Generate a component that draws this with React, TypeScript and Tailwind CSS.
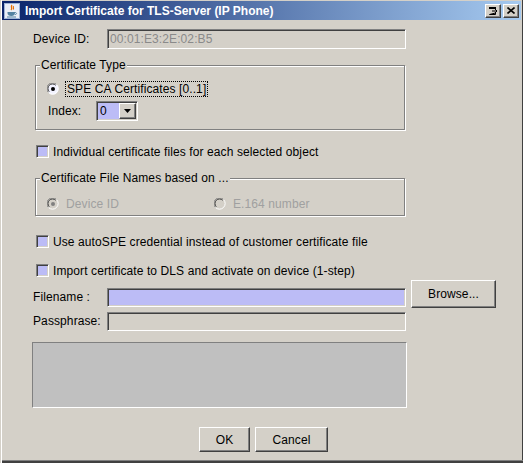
import React from "react";

const sunken =
  "border border-t-[#808080] border-l-[#808080] border-b-white border-r-white shadow-[inset_1px_1px_0_#404040,inset_-1px_-1px_0_#D4D0C8]";
const raised =
  "border border-t-white border-l-white border-b-[#404040] border-r-[#404040] shadow-[inset_-1px_-1px_0_#808080]";

function JavaIcon() {
  return (
    <svg width="16" height="16" viewBox="0 0 16 16">
      <rect x="0.5" y="0.5" width="15" height="15" fill="#E9EEF7" stroke="#9DB3D6" />
      <path d="M8 2 C6 4 9 5 7 7 M9.5 3 C8.5 4.5 10.5 5 9 6.5" stroke="#E76F00" strokeWidth="1.2" fill="none" />
      <path d="M3.5 9 H11 V10 C11 12 9.5 13 7.3 13 C5 13 3.5 12 3.5 10 Z" fill="#5382A1" />
      <path d="M11 9.5 C13 9.5 13 11.5 11 11.5" stroke="#5382A1" strokeWidth="1" fill="none" />
      <rect x="3" y="13.5" width="9" height="1" fill="#5382A1" />
    </svg>
  );
}

function TitleButton({ children }: { children: React.ReactNode }) {
  return (
    <div className={`w-[16px] h-[14px] bg-[#D4D0C8] flex items-center justify-center ${raised}`}>{children}</div>
  );
}

function Checkbox({ label }: { label: string }) {
  return (
    <div className="flex items-center h-[13px] ml-[3px]">
      <div className={`w-[13px] h-[13px] bg-[#BCBCF6] ${sunken}`} />
      <span className="ml-[4px] leading-[14px]">{label}</span>
    </div>
  );
}

function Radio({ checked, disabled }: { checked: boolean; disabled?: boolean }) {
  return (
    <svg width="12" height="12" viewBox="0 0 12 12" className="shrink-0">
      <circle cx="6" cy="6" r="5.5" fill={disabled ? "#D4D0C8" : "#F2F2FF"} />
      <path d="M1.5 9.5 A5.5 5.5 0 0 1 9.5 1.5" stroke="#808080" strokeWidth="1" fill="none" />
      <path d="M2.3 8.7 A4.5 4.5 0 0 1 8.7 2.3" stroke="#404040" strokeWidth="1" fill="none" />
      <path d="M9.5 1.5 A5.5 5.5 0 0 1 1.5 9.5" stroke="#FFFFFF" strokeWidth="1" fill="none" />
      {checked && <circle cx="6" cy="6" r="2" fill={disabled ? "#808080" : "#000"} />}
    </svg>
  );
}

function Group({ title, className, children }: { title: string; className: string; children: React.ReactNode }) {
  return (
    <div
      className={`relative ml-[2px] w-[370px] border border-[#808080] shadow-[1px_1px_0_#fff,inset_1px_1px_0_#fff] ${className}`}
    >
      <span className="absolute top-[-8px] left-[4px] px-[1px] bg-[#D4D0C8] leading-[14px]">{title}</span>
      {children}
    </div>
  );
}

export default function App() {
  return (
    <div className="w-[523px] h-[463px] bg-[#D4D0C8] overflow-hidden text-[12px] tracking-[0.1px] text-black font-['Liberation_Sans',Arial,sans-serif] shadow-[inset_1px_0_0_#D4D0C8,inset_2px_0_0_#fff,inset_0_-2px_0_#404040,inset_0_-3px_0_#808080,inset_-1px_0_0_#404040]">
      <div className="pt-[1px] px-[2px] flex flex-col">
        {/* title bar */}
        <div className="h-[19px] flex items-center bg-[linear-gradient(to_right,#0A246A,#A6CAF0)] pl-[2px] pr-[2px]">
          <JavaIcon />
          <span className="ml-[5px] text-white font-bold text-[12px] tracking-[0px] leading-[14px]">
            Import Certificate for TLS-Server (IP Phone)
          </span>
          <div className="ml-auto flex gap-[2px]">
            <TitleButton>
              <svg width="9" height="8" viewBox="0 0 9 8">
                <path d="M0.5 0.5 H6.5 V2 M6.5 6 V7.5 H0.5 Z" stroke="#000" fill="none" />
                <rect x="0" y="0" width="7" height="2" fill="#000" />
                <path d="M3 4 H8 M6 2 L8 4 L6 6" stroke="#000" fill="none" />
              </svg>
            </TitleButton>
            <TitleButton>
              <svg width="8" height="7" viewBox="0 0 8 7">
                <path d="M0.5 0.5 L7.5 6.5 M7.5 0.5 L0.5 6.5" stroke="#000" strokeWidth="1.6" />
              </svg>
            </TitleButton>
          </div>
        </div>

        {/* dialog body */}
        <div className="pl-[31px] flex flex-col">
          <div className="mt-[9px] flex items-center h-[20px]">
            <span className="w-[74px]">Device ID:</span>
            <div className={`w-[299px] h-[20px] bg-[#D4D0C8] flex items-center pl-[2px] text-[#8A8A8A] ${sunken}`}>
              00:01:E3:2E:02:B5
            </div>
          </div>

          <Group title="Certificate Type" className="mt-[16px] h-[65px]">
            <div className="mt-[15px] pl-[11px] flex items-center h-[16px]">
              <Radio checked />
              <span className="ml-[6px] border border-dotted border-black px-[1px] leading-[14px]">
                SPE CA Certificates [0..1]
              </span>
            </div>
            <div className="mt-[4px] pl-[12px] flex items-center h-[20px]">
              <span className="w-[48px]">Index:</span>
              <div className={`w-[42px] h-[20px] flex ${sunken} p-[1px]`}>
                <div className="flex-1 bg-[#BCBCF6] flex items-center pl-[2px]">0</div>
                <div className={`w-[17px] h-full bg-[#D4D0C8] flex items-center justify-center ${raised}`}>
                  <svg width="7" height="4" viewBox="0 0 7 4">
                    <path d="M0 0 H7 L3.5 4 Z" fill="#000" />
                  </svg>
                </div>
              </div>
            </div>
          </Group>

          <div className="mt-[15px]">
            <Checkbox label="Individual certificate files for each selected object" />
          </div>

          <Group title="Certificate File Names based on ..." className="mt-[20px] h-[38px]">
            <div className="mt-[18px] pl-[11px] flex items-center h-[14px] text-[#A0A0A0]">
              <div className="w-[167px] flex items-center">
                <Radio checked disabled />
                <span className="ml-[7px]">Device ID</span>
              </div>
              <Radio checked={false} disabled />
              <span className="ml-[7px]">E.164 number</span>
            </div>
          </Group>

          <div className="mt-[19px]">
            <Checkbox label="Use autoSPE credential instead of customer certificate file" />
          </div>
          <div className="mt-[16px]">
            <Checkbox label="Import certificate to DLS and activate on device (1-step)" />
          </div>

          <div className="mt-[3px] flex items-start">
            <span className="w-[74px] mt-[8px] leading-[19px]">Filename :</span>
            <div className={`mt-[8px] w-[299px] h-[19px] bg-[#BCBCF6] ${sunken}`} />
            <button className={`ml-[5px] w-[85px] h-[28px] bg-[#D4D0C8] ${raised}`}>Browse...</button>
          </div>

          <div className="mt-[4px] flex items-center">
            <span className="w-[74px] leading-[19px]">Passphrase:</span>
            <div className={`w-[299px] h-[19px] bg-[#D4D0C8] ${sunken}`} />
          </div>

          <div className="mt-[11px] -ml-px w-[375px] h-[66px] bg-[#C0C0C0] border border-t-[#808080] border-l-[#808080] border-b-white border-r-white" />

          <div className="mt-[19px] ml-[166px] flex gap-[5px]">
            <button className={`w-[51px] h-[25px] bg-[#D4D0C8] ${raised}`}>OK</button>
            <button className={`w-[73px] h-[25px] bg-[#D4D0C8] ${raised}`}>Cancel</button>
          </div>
        </div>
      </div>
    </div>
  );
}
